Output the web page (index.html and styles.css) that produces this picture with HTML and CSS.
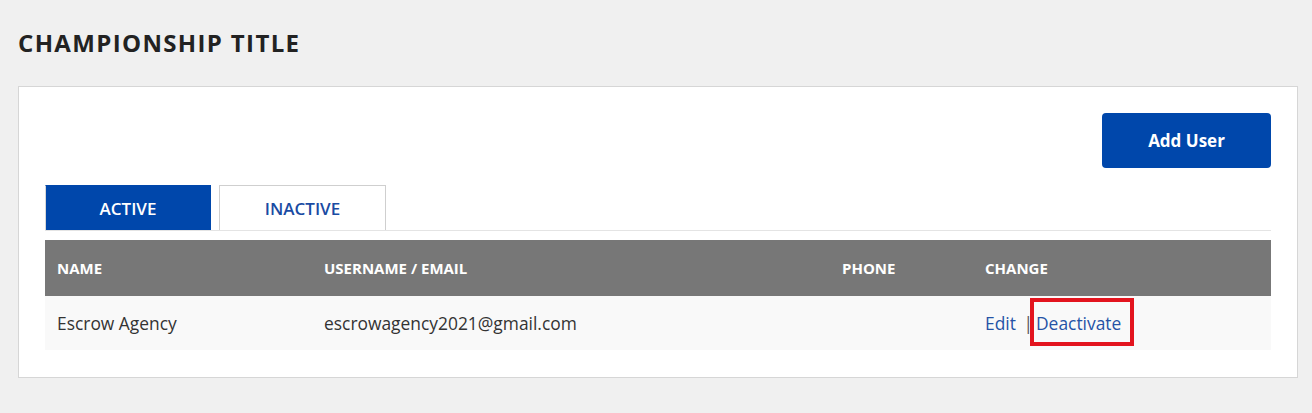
FILE: index.html
```html
<!DOCTYPE html>
<html lang="en">
<head>
  <meta charset="UTF-8" />
  <title>Users - Championship Title</title>
  <link rel="stylesheet" href="styles.css">
</head>
<body>
  <main class="page">
    <h1 class="page-title">Championship Title</h1>

    <section class="card">
      <div class="toolbar">
        <button class="btn-add">Add User</button>
      </div>

      <div class="tabs">
        <a class="tab active" href="#">Active</a>
        <a class="tab" href="#">Inactive</a>
      </div>

      <table class="users">
        <colgroup>
          <col class="col-name">
          <col class="col-email">
          <col class="col-phone">
          <col>
        </colgroup>
        <thead>
          <tr>
            <th>Name</th>
            <th>Username / Email</th>
            <th>Phone</th>
            <th>Change</th>
          </tr>
        </thead>
        <tbody>
          <tr>
            <td>Escrow Agency</td>
            <td>escrowagency2021@gmail.com</td>
            <td></td>
            <td>
              <a class="link" href="#">Edit</a>
              <span class="sep">|</span><a class="link marked" href="#">Deactivate</a>
            </td>
          </tr>
        </tbody>
      </table>
    </section>
  </main>
</body>
</html>
```

FILE: styles.css
```css
body {
  margin: 0;
  background-color: #f0f0f0;
  font-family: "Open Sans", Arial, sans-serif;
  color: #333;
}

.page {
  padding: 26px 14px 0 18px;
}

.page-title {
  margin: 0 0 27px 0;
  font-size: 24px;
  font-weight: 700;
  text-transform: uppercase;
  color: #222;
  letter-spacing: 1.35px;
}

.card {
  background: white;
  border: 1px solid #d6d6d6;
  padding: 26px 26px 27px;
}

.toolbar {
  display: flex;
  justify-content: flex-end;
}

.btn-add {
  width: 169px;
  height: 55px;
  border: none;
  border-radius: 4px;
  background-color: #0047ab;
  color: white;
  font-family: inherit;
  font-size: 17px;
  font-weight: 700;
  cursor: pointer;
}

.tabs {
  display: flex;
  gap: 8px;
  margin-top: 17px;
  margin-bottom: 9px;
  border-bottom: 1px solid #e4e4e4;
}

.tab {
  width: 165px;
  height: 44px;
  display: flex;
  align-items: center;
  justify-content: center;
  border: 1px solid #cfcfcf;
  border-bottom: none;
  font-size: 17px;
  font-weight: 600;
  text-transform: uppercase;
  text-decoration: none;
  color: #1a4ba3;
  background: white;
}

.tab.active {
  width: 164px;
  background-color: #0047ab;
  border-color: #0047ab;
  border-left-color: #d8d8d8;
  color: white;
}

.users {
  width: 100%;
  border-collapse: collapse;
  table-layout: fixed;
}

.col-name { width: 267px; }
.col-email { width: 518px; }
.col-phone { width: 143px; }

.users th {
  height: 56px;
  padding: 0 12px;
  background-color: #777;
  color: white;
  text-align: left;
  font-size: 15px;
  font-weight: 700;
  text-transform: uppercase;
}

.users td {
  height: 54px;
  padding: 0 12px;
  background-color: #f9f9f9;
  font-size: 17.4px;
  color: #333;
}

.link {
  color: #2553a6;
  text-decoration: none;
}

.sep {
  color: #555;
  margin-left: 3px;
  margin-right: 3px;
}

.marked {
  position: relative;
}

.marked::after {
  content: "";
  position: absolute;
  left: -6px;
  right: -13px;
  top: -13px;
  bottom: -11px;
  border: 4px solid #e3141e;
}
```
